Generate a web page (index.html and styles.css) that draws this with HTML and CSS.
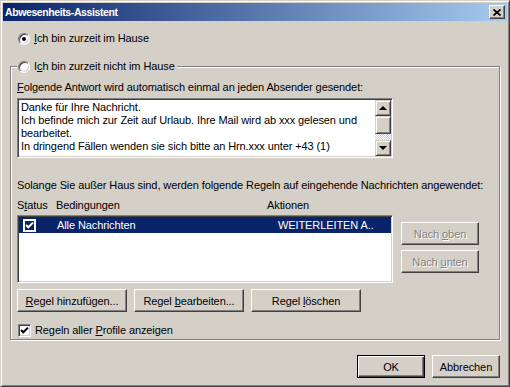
FILE: index.html
```html
<!DOCTYPE html>
<html>
<head>
    <title>Abwesenheits-Assistent</title>
    <link rel="stylesheet" href="styles.css">
</head>
<body>
    <div class="window">
        <div class="titlebar">
            <span class="title">Abwesenheits-Assistent</span>
            <span class="close-btn">
                <svg width="8" height="7" viewBox="0 0 8 7"><path d="M0.5 0.5 L7.5 6.5 M7.5 0.5 L0.5 6.5" stroke="#000" stroke-width="1.7"/></svg>
            </span>
        </div>

        <div class="client">
            <label class="option first-option">
                <span class="radio checked"></span>
                <span><u>I</u>ch bin zurzeit im Hause</span>
            </label>

            <fieldset class="group">
                <legend>
                    <label class="option">
                        <span class="radio"></span>
                        <span>I<u>c</u>h bin zurzeit nicht im Hause</span>
                    </label>
                </legend>

                <div class="caption"><u>F</u>olgende Antwort wird automatisch einmal an jeden Absender gesendet:</div>

                <div class="memo">
                    <div class="memo-text">
                        <div>Danke für Ihre Nachricht.</div>
                        <div>Ich befinde mich zur Zeit auf Urlaub. Ihre Mail wird ab xxx gelesen und</div>
                        <div>bearbeitet.</div>
                        <div>In dringend Fällen wenden sie sich bitte an Hrn.xxx unter +43 (1)</div>
                    </div>
                    <div class="scrollbar">
                        <span class="sb-btn"><span class="arrow-up"></span></span>
                        <span class="sb-thumb"></span>
                        <span class="sb-track"></span>
                        <span class="sb-btn"><span class="arrow-down"></span></span>
                    </div>
                </div>

                <div class="caption rules-caption">Solange Sie außer Haus sind, werden folgende Regeln auf eingehende Nachrichten angewendet:</div>

                <div class="rules">
                    <div class="rules-left">
                        <div class="rules-head">
                            <span>S<u>t</u>atus</span>
                            <span>Bedingungen</span>
                            <span>Aktionen</span>
                        </div>
                        <div class="listbox">
                            <div class="rule-row selected">
                                <span class="cell-check"><span class="row-check"><svg width="9" height="9" viewBox="0 0 9 9"><path d="M1 4 L3.3 6.3 L8 1.6" stroke="#fff" stroke-width="2" fill="none"/></svg></span></span>
                                <span>Alle Nachrichten</span>
                                <span>WEITERLEITEN A..</span>
                            </div>
                        </div>
                    </div>
                    <div class="rules-side">
                        <button class="btn side-btn" disabled>Nach <u>o</u>ben</button>
                        <button class="btn side-btn" disabled>Nach <u>u</u>nten</button>
                    </div>
                </div>

                <div class="rule-buttons">
                    <button class="btn rule-btn"><u>R</u>egel hinzufügen...</button>
                    <button class="btn rule-btn">Regel <u>b</u>earbeiten...</button>
                    <button class="btn rule-btn">Regel <u>l</u>öschen</button>
                </div>

                <label class="option check-row">
                    <span class="checkbox"><svg width="9" height="9" viewBox="0 0 9 9"><path d="M1 4 L3.3 6.3 L8 1.6" stroke="#000" stroke-width="2" fill="none"/></svg></span>
                    <span>Regeln aller <u>P</u>rofile anzeigen</span>
                </label>
            </fieldset>

            <div class="dialog-buttons">
                <button class="btn dialog-btn default">OK</button>
                <button class="btn dialog-btn">Abbrechen</button>
            </div>
        </div>
    </div>
</body>
</html>
```

FILE: styles.css
```css
body {
    margin: 0;
    font-family: 'Liberation Sans', Arial, sans-serif;
    font-size: 11px;
    letter-spacing: -0.1px;
    color: #000;
    background-color: #d4d0c8;
}
.window {
    width: 510px;
    height: 387px;
    box-sizing: border-box;
    padding: 2px;
    background-color: #d4d0c8;
    border: 1px solid;
    border-color: #d4d0c8 #404040 #404040 #d4d0c8;
    box-shadow: inset 1px 1px 0 #fff, inset -1px -1px 0 #808080;
}
.titlebar {
    height: 18px;
    display: flex;
    align-items: center;
    justify-content: space-between;
    padding: 0 2px;
    background: linear-gradient(to right, #0a246a, #a6caf0);
}
.title {
    color: #fff;
    font-weight: bold;
    font-size: 10.5px;
    letter-spacing: -0.4px;
}
.close-btn {
    width: 16px;
    height: 14px;
    box-sizing: border-box;
    display: flex;
    align-items: center;
    justify-content: center;
    background-color: #d4d0c8;
    border: 1px solid;
    border-color: #fff #404040 #404040 #fff;
    box-shadow: inset -1px -1px 0 #808080;
}
.client {
    padding: 0 7px;
}
u {
    text-decoration: underline;
    text-underline-offset: 1px;
}
.option {
    display: flex;
    align-items: center;
    line-height: 13px;
    height: 13px;
}
.first-option {
    margin-top: 11px;
    padding-left: 8px;
}
.radio {
    width: 12px;
    height: 12px;
    box-sizing: border-box;
    margin-right: 4px;
    border-radius: 50%;
    border: 1px solid;
    border-color: #808080 #fff #fff #808080;
    box-shadow: inset 1px 1px 0 #404040, inset -1px -1px 0 #d4d0c8;
    background-color: #fff;
    display: flex;
    align-items: center;
    justify-content: center;
}
.radio.checked::after {
    content: "";
    width: 4px;
    height: 4px;
    border-radius: 50%;
    background-color: #000;
}
.group {
    margin: 15px 0 0;
    padding: 8px 6px 2px 6px;
    border: 1px solid #808080;
    box-shadow: 1px 1px 0 #fff, inset 1px 1px 0 #fff;
    min-width: 0;
}
.group legend {
    padding: 0 2px 0 1px;
    margin-left: 0;
    background-color: #d4d0c8;
}
.caption {
    line-height: 13px;
    white-space: nowrap;
}
.memo {
    margin-top: 4px;
    width: 376px;
    height: 60px;
    box-sizing: border-box;
    display: flex;
    background-color: #fff;
    border: 1px solid;
    border-color: #808080 #fff #fff #808080;
    box-shadow: inset 1px 1px 0 #404040, inset -1px -1px 0 #d4d0c8;
    padding: 1px;
}
.memo-text {
    flex: 1;
    padding: 1px 0 0 2px;
    line-height: 13px;
    white-space: nowrap;
    overflow: hidden;
}
.scrollbar {
    width: 16px;
    display: flex;
    flex-direction: column;
}
.sb-btn,
.sb-thumb {
    box-sizing: border-box;
    background-color: #d4d0c8;
    border: 1px solid;
    border-color: #d4d0c8 #404040 #404040 #d4d0c8;
    box-shadow: inset 1px 1px 0 #fff, inset -1px -1px 0 #808080;
}
.sb-btn {
    height: 16px;
    display: flex;
    align-items: center;
    justify-content: center;
}
.sb-thumb {
    height: 18px;
}
.sb-track {
    flex: 1;
    background: repeating-conic-gradient(#fff 0 25%, #d4d0c8 0 50%) 0 0 / 2px 2px;
}
.arrow-up {
    width: 0;
    height: 0;
    border-left: 4px solid transparent;
    border-right: 4px solid transparent;
    border-bottom: 4px solid #000;
}
.arrow-down {
    width: 0;
    height: 0;
    border-left: 4px solid transparent;
    border-right: 4px solid transparent;
    border-top: 4px solid #000;
}
.rules-caption {
    margin-top: 21px;
}
.rules {
    display: flex;
    gap: 8px;
    margin-top: 7px;
}
.rules-left {
    width: 376px;
}
.rules-head {
    display: grid;
    grid-template-columns: 39px 211px 1fr;
    line-height: 13px;
}
.listbox {
    margin-top: 3px;
    height: 68px;
    box-sizing: border-box;
    background-color: #fff;
    border: 1px solid;
    border-color: #808080 #fff #fff #808080;
    box-shadow: inset 1px 1px 0 #404040, inset -1px -1px 0 #d4d0c8;
    padding: 1px;
}
.rule-row {
    height: 16px;
    display: grid;
    grid-template-columns: 38px 221px 1fr;
    align-items: center;
    white-space: nowrap;
}
.rule-row.selected {
    background-color: #0a246a;
    color: #fff;
}
.cell-check {
    padding-left: 4px;
    display: flex;
}
.row-check {
    width: 13px;
    height: 13px;
    box-sizing: border-box;
    border: 2px solid #fff;
    background-color: #0a246a;
    display: flex;
    align-items: center;
    justify-content: center;
}
.rules-side {
    display: flex;
    flex-direction: column;
    gap: 5px;
    padding-top: 23px;
}
.btn {
    font-family: inherit;
    font-size: 11px;
    letter-spacing: -0.1px;
    color: #000;
    height: 23px;
    padding: 0;
    box-sizing: border-box;
    background-color: #d4d0c8;
    border: 1px solid;
    border-color: #fff #404040 #404040 #fff;
    box-shadow: inset -1px -1px 0 #808080;
}
.btn:disabled {
    color: #808080;
    text-shadow: 1px 1px 0 #fff;
}
.side-btn {
    width: 78px;
}
.rule-buttons {
    display: flex;
    gap: 7px;
    margin-top: 6px;
}
.rule-btn {
    width: 110px;
}
.check-row {
    margin-top: 12px;
    padding-left: 1px;
}
.checkbox {
    width: 13px;
    height: 13px;
    box-sizing: border-box;
    margin-right: 4px;
    border: 1px solid;
    border-color: #808080 #fff #fff #808080;
    box-shadow: inset 1px 1px 0 #404040, inset -1px -1px 0 #d4d0c8;
    background-color: #fff;
    display: flex;
    align-items: center;
    justify-content: center;
}
.dialog-buttons {
    display: flex;
    justify-content: flex-end;
    gap: 7px;
    margin-top: 15px;
}
.dialog-btn {
    width: 68px;
}
.dialog-btn.default {
    border: 1px solid #000;
    box-shadow: inset 1px 1px 0 #fff, inset -1px -1px 0 #404040, inset -2px -2px 0 #808080;
}
```
